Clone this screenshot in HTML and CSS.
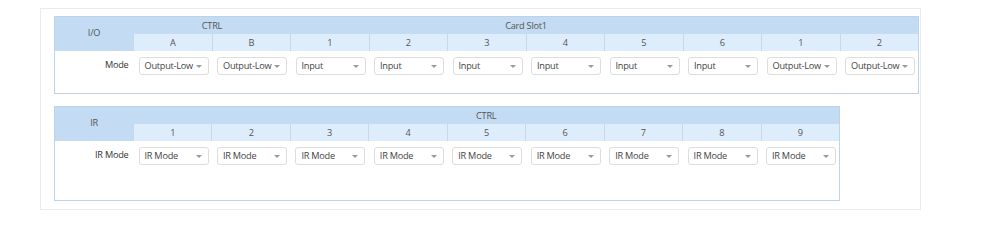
FILE: index.html
```html
<!DOCTYPE html>
<html>
<head>
<meta charset="utf-8">
<link rel="stylesheet" href="styles.css">
</head>
<body>
<div class="panel">
  <table class="grid io">
    <colgroup>
      <col class="c-label"><col span="10" class="c-col">
    </colgroup>
    <tr class="h1">
      <th rowspan="2" class="corner">I/O</th>
      <th colspan="2">CTRL</th>
      <th colspan="6">Card Slot1</th>
      <th colspan="2"></th>
    </tr>
    <tr class="h2">
      <th>A</th><th>B</th><th>1</th><th>2</th><th>3</th><th>4</th><th>5</th><th>6</th><th>1</th><th>2</th>
    </tr>
    <tr class="body-row r1">
      <td class="lbl">Mode</td>
      <td><div class="sel"><span>Output-Low</span><i></i></div></td>
      <td><div class="sel"><span>Output-Low</span><i></i></div></td>
      <td><div class="sel"><span>Input</span><i></i></div></td>
      <td><div class="sel"><span>Input</span><i></i></div></td>
      <td><div class="sel"><span>Input</span><i></i></div></td>
      <td><div class="sel"><span>Input</span><i></i></div></td>
      <td><div class="sel"><span>Input</span><i></i></div></td>
      <td><div class="sel"><span>Input</span><i></i></div></td>
      <td><div class="sel"><span>Output-Low</span><i></i></div></td>
      <td><div class="sel"><span>Output-Low</span><i></i></div></td>
    </tr>
  </table>

  <table class="grid ir">
    <colgroup>
      <col class="c-label"><col span="9" class="c-col">
    </colgroup>
    <tr class="h1">
      <th rowspan="2" class="corner">IR</th>
      <th colspan="9">CTRL</th>
    </tr>
    <tr class="h2">
      <th>1</th><th>2</th><th>3</th><th>4</th><th>5</th><th>6</th><th>7</th><th>8</th><th>9</th>
    </tr>
    <tr class="body-row r2">
      <td class="lbl">IR Mode</td>
      <td><div class="sel"><span>IR Mode</span><i></i></div></td>
      <td><div class="sel"><span>IR Mode</span><i></i></div></td>
      <td><div class="sel"><span>IR Mode</span><i></i></div></td>
      <td><div class="sel"><span>IR Mode</span><i></i></div></td>
      <td><div class="sel"><span>IR Mode</span><i></i></div></td>
      <td><div class="sel"><span>IR Mode</span><i></i></div></td>
      <td><div class="sel"><span>IR Mode</span><i></i></div></td>
      <td><div class="sel"><span>IR Mode</span><i></i></div></td>
      <td><div class="sel"><span>IR Mode</span><i></i></div></td>
    </tr>
  </table>
</div>
</body>
</html>
```

FILE: styles.css
```css
html, body {
  margin: 0;
  padding: 0;
  background: #ffffff;
}
body {
  font-family: "Open Sans", "Noto Sans", sans-serif;
  font-size: 9.2px;
  letter-spacing: -0.25px;
  color: #444;
}
.panel {
  box-sizing: border-box;
  margin: 8px 0 0 40px;
  width: 881px;
  height: 202px;
  border: 1px solid #ebebeb;
  padding: 7px 0 0 13px;
  overflow: hidden;
}
.grid {
  border-collapse: collapse;
  table-layout: fixed;
  border: 1px solid #bcd3e8;
}
.grid.io { width: 865px; }
.grid.ir { width: 786px; margin-top: 12px; }
.c-label { width: 79px; }
.grid th {
  font-weight: normal;
  color: #555;
  padding: 0;
  text-align: center;
  line-height: 12px;
}
.h1 th {
  background: #c3dcf3;
  height: 17px;
}
.h1 th.corner {
  background: #c3dcf3;
  vertical-align: middle;
  padding-bottom: 2px;
}
.h2 th {
  background: #deedfb;
  height: 16px;
  border-left: 1px solid #c6d8ea;
  padding-top: 1px;
}
.grid td {
  padding: 6px 0 0 5px;
  vertical-align: top;
}
.r1 td { height: 35px; }
.r2 td { height: 52px; }
.grid td.lbl {
  text-align: right;
  padding: 7px 5px 0 0;
  color: #333;
  line-height: 14px;
}
.sel {
  box-sizing: border-box;
  width: 70px;
  height: 18px;
  border: 1px solid #dddddd;
  border-radius: 3px;
  background: #fff;
  display: flex;
  align-items: center;
  padding: 0 6px 0 5px;
  color: #444;
}
.sel span {
  white-space: nowrap;
  line-height: 16px;
}
.sel i {
  flex: none;
  margin-left: auto;
  width: 0;
  height: 0;
  border-left: 3px solid transparent;
  border-right: 3px solid transparent;
  border-top: 3px solid #9a9a9a;
}
```
